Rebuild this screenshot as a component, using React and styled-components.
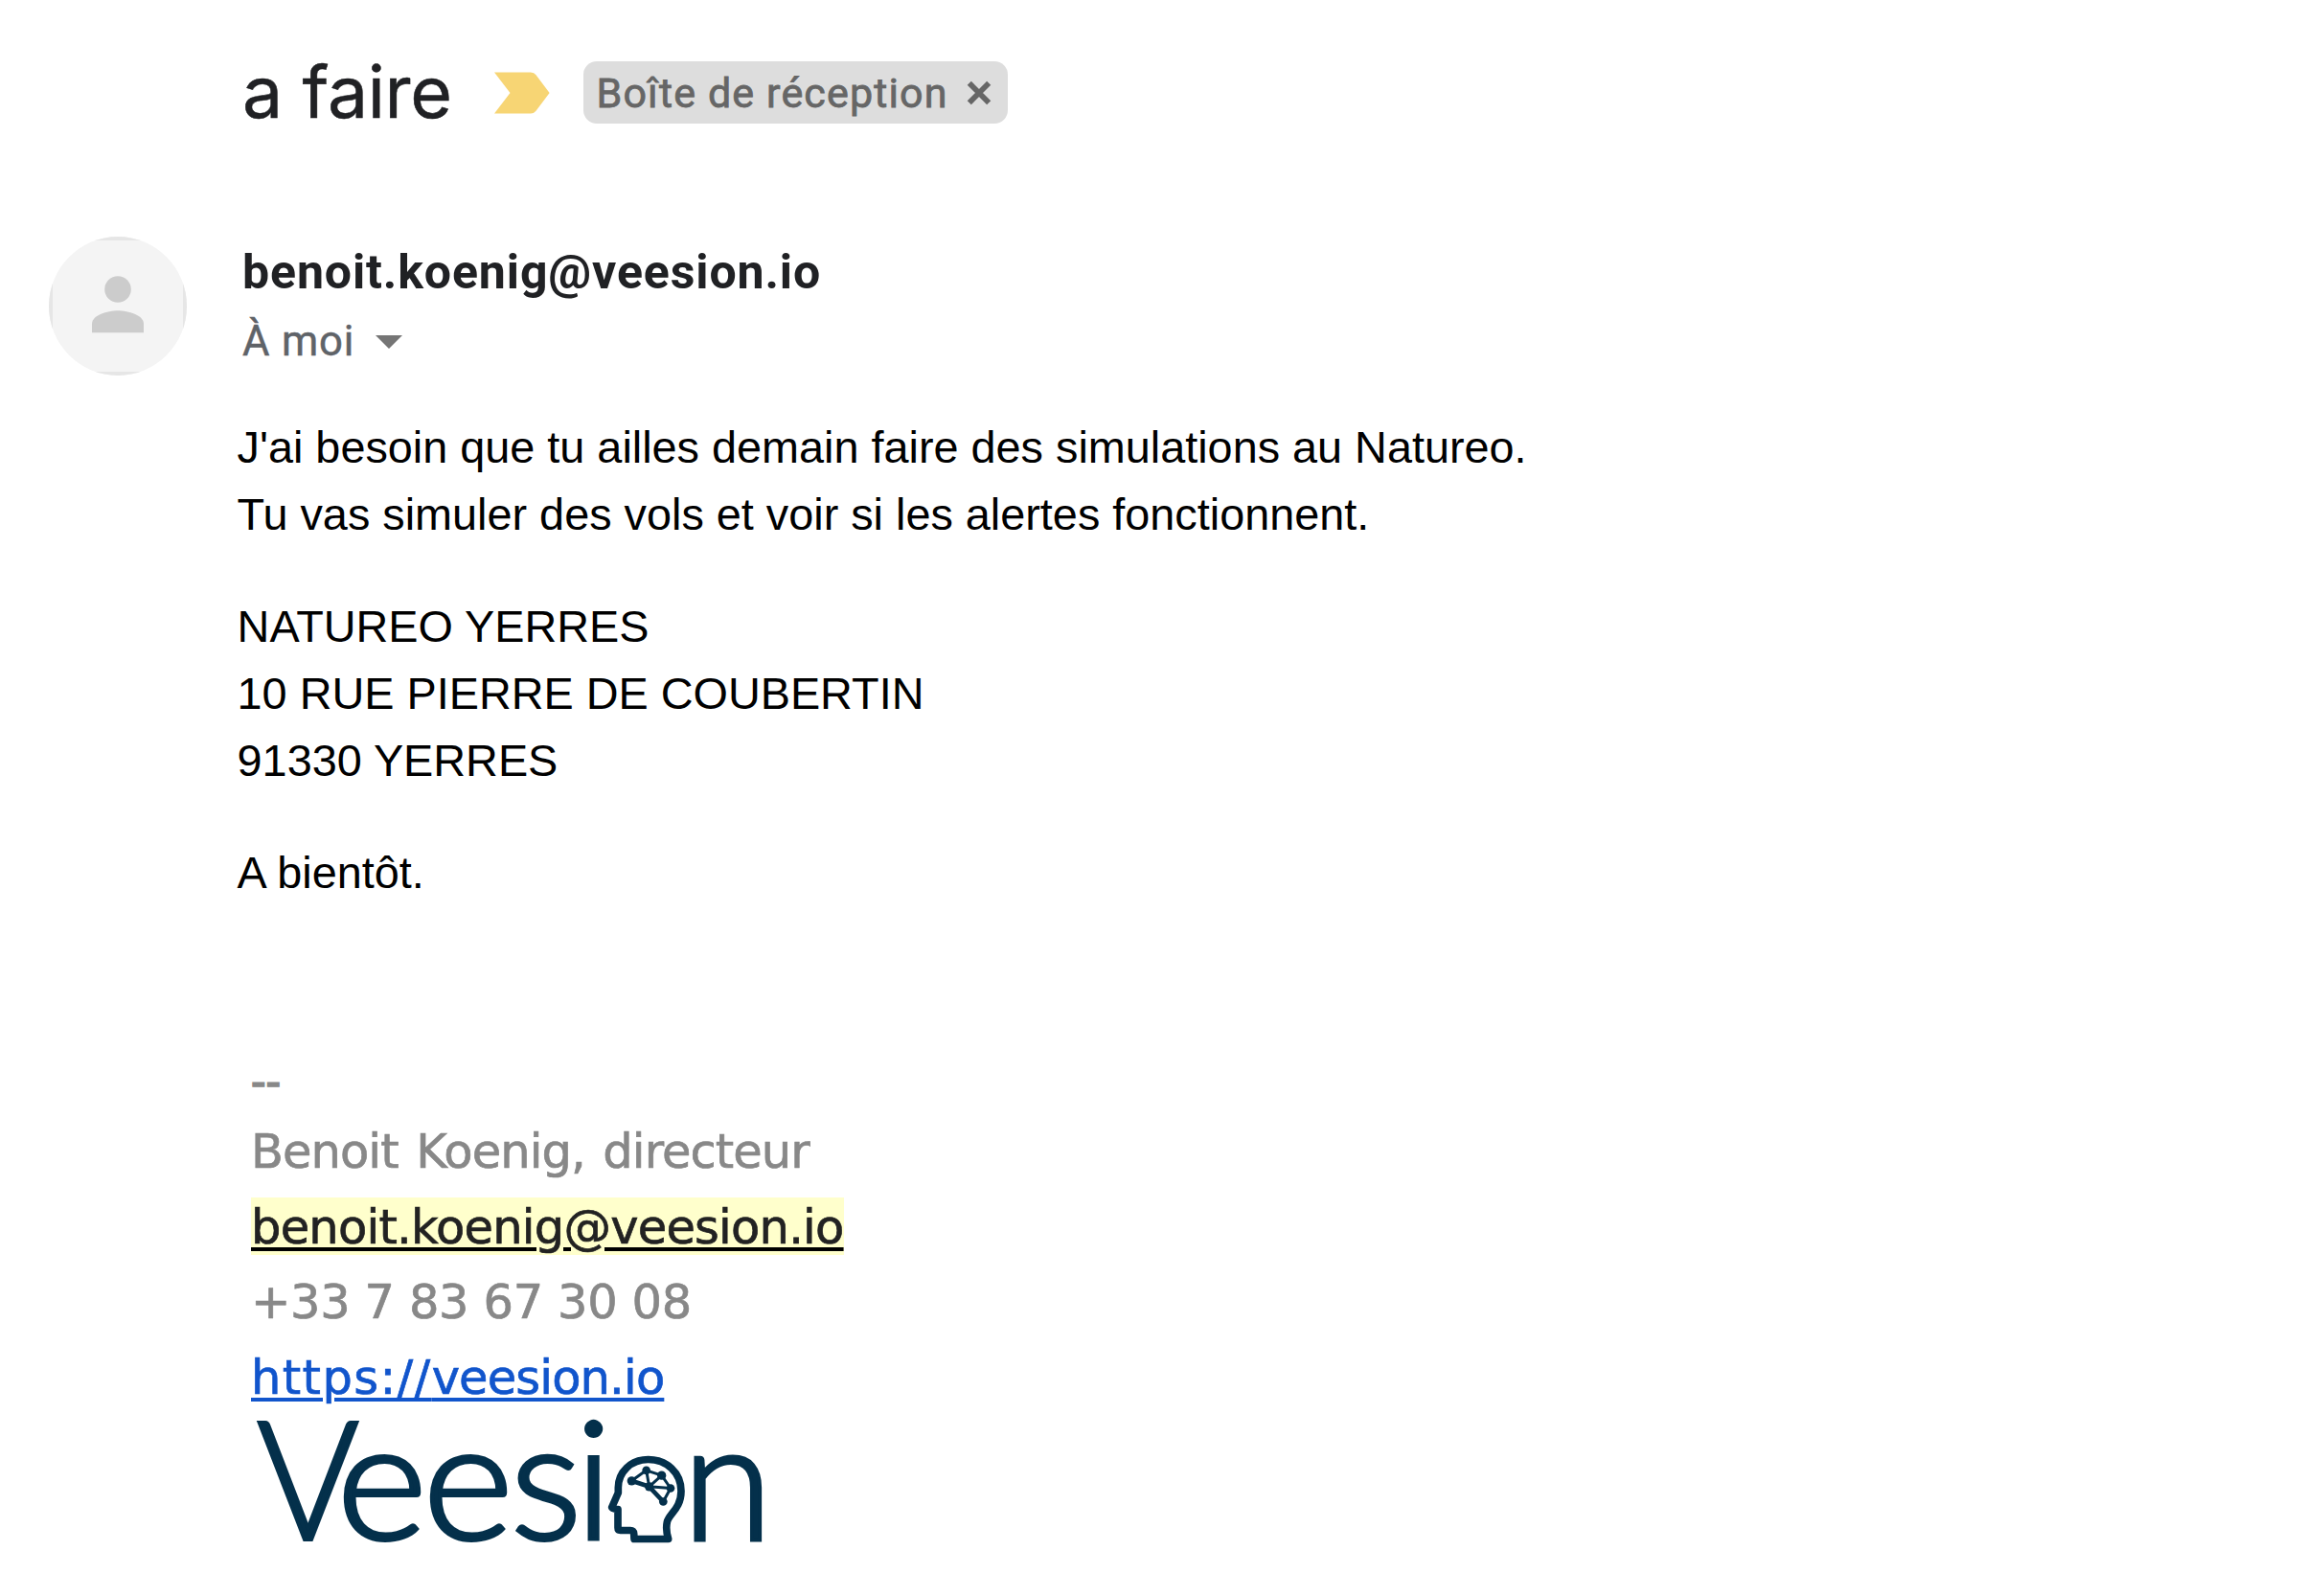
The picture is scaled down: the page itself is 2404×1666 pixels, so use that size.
import React from 'react';
import styled, { createGlobalStyle } from 'styled-components';

const GlobalStyle = createGlobalStyle`
  *, *::before, *::after { box-sizing: border-box; }
  body { margin: 0; background: #fff; }
`;

const Page = styled.main`
  display: flex;
  flex-direction: column;
  width: 2404px;
  height: 1666px;
  overflow: hidden;
  background: #fff;
  color: #000;
  white-space: nowrap;
`;

const SubjectBar = styled.header`
  display: flex;
  align-items: center;
  height: 65px;
  margin-top: 64px;
  padding-left: 253px;
`;

const Subject = styled.h1`
  width: 221px;
  margin: 0;
  padding-bottom: 2px;
  font: 400 75px/86px Inter, sans-serif;
  letter-spacing: -0.3px;
  color: #202124;
  -webkit-text-stroke: 0.5px #202124;
`;

const ImportanceMarker = styled.svg`
  display: block;
  width: 58px;
  height: 44px;
  margin: 0 35px 0 42px;
  fill: #f7d574;
`;

const LabelChip = styled.span`
  display: flex;
  align-items: center;
  justify-content: space-between;
  width: 443px;
  height: 65px;
  padding: 1px 17px 0 13.5px;
  border-radius: 14px;
  background: #ddd;
  color: #666;
  font: 400 43px/60px Roboto, sans-serif;
  letter-spacing: 1.15px;
  -webkit-text-stroke: 0.8px #666;
`;

const CloseIcon = styled.svg`
  display: block;
  width: 26px;
  height: 26px;
  stroke: #666;
  stroke-width: 5.8;
`;

const SenderBar = styled.section`
  display: flex;
  height: 145px;
  margin-top: 118px;
  padding-left: 51px;
`;

const Avatar = styled.div`
  width: 144px;
  height: 145px;
  border-radius: 50%;
  overflow: hidden;
`;

const AvatarFrame = styled.div`
  display: grid;
  place-items: center;
  width: 100%;
  height: 100%;
  padding-bottom: 4px;
  border: 4px solid #e6e6e6;
  background: #f4f4f4;
`;

const PersonIcon = styled.svg`
  display: block;
  width: 54px;
  height: 60px;
  fill: #ccc;
`;

const SenderInfo = styled.div`
  display: flex;
  flex-direction: column;
  padding: 7px 0 0 58px;
`;

const SenderName = styled.strong`
  font: 700 50px/60px Roboto, sans-serif;
  letter-spacing: 0.89px;
  color: #202124;
`;

const Recipient = styled.div`
  display: flex;
  align-items: center;
  gap: 22px;
  margin-top: 18px;
  font: 400 43.6px/50px Roboto, sans-serif;
  letter-spacing: 0.85px;
  color: #5f6368;
  -webkit-text-stroke: 0.5px #5f6368;
`;

const Caret = styled.span`
  border: 14px solid transparent;
  border-top-color: #757575;
  border-bottom: 0;
`;

const Body = styled.article`
  display: flex;
  flex-direction: column;
  gap: 46.3px;
  margin-top: 40.1px;
  padding-left: 247.6px;
  font: 400 46.8px/70.2px "Liberation Sans", Arial, sans-serif;
`;

const Paragraph = styled.p`
  margin: 0;
`;

const Signature = styled.footer`
  display: flex;
  flex-direction: column;
  align-items: flex-start;
  margin-top: 148px;
  padding-left: 262px;
  color: #888;
`;

const Separator = styled.div`
  font: 400 46.8px/70px "Liberation Sans", Arial, sans-serif;
  margin-bottom: -1px;
  -webkit-text-stroke: 1.6px #888;
`;

const SignatureLine = styled.div`
  font: 400 49.5px/78.6px "DejaVu Sans", Verdana, sans-serif;
  letter-spacing: ${({ $spacing }) => $spacing}px;
  word-spacing: ${({ $words = 0 }) => $words}px;
  -webkit-text-stroke: 0.7px currentColor;
`;

const Link = styled.a`
  color: #1155cc;
  text-decoration: underline;
  text-decoration-thickness: 4px;
  text-underline-offset: 3.5px;
`;

const MarkedLink = styled(Link)`
  padding-top: 2px;
  background: #ffffcc;
  color: #222;
  text-decoration-color: #000;
`;

const Scheme = styled.span`
  letter-spacing: 1.4px;
`;

const LogoImage = styled.svg`
  display: block;
  width: 544px;
  height: 144px;
  overflow: visible;
  fill: #04304b;
`;

const LogoLetter = styled.text`
  font: 300 172px Lato, sans-serif;
  stroke: #04304b;
  stroke-width: 4px;
`;

const LOGO_LETTERS = [
  { char: 'V', x: 268.5, stretch: 0.94 },
  { char: 'e', x: 351.6, stretch: 1.05 },
  { char: 'e', x: 441.6, stretch: 1.05 },
  { char: 's', x: 532.8, stretch: 1.02 },
  { char: 'i', x: 600.6, stretch: 1 },
  { char: 'n', x: 712.5, stretch: 0.99 },
];

const NODES = [
  [388, 229, 14],
  [434, 196, 13],
  [482, 212, 14],
  [443, 247, 14],
  [510, 252, 13],
  [487, 294, 13],
];

const EDGES = 'M388 229L434 196L482 212L510 252L487 294L443 247ZM434 196L443 247L482 212M443 247L510 252';

function Logo() {
  return (
    <LogoImage viewBox="262 1477 544 144" role="img" aria-label="Veesion">
      {LOGO_LETTERS.map(({ char, x, stretch }, i) => (
        <LogoLetter key={i} transform={`translate(${x} 1607) scale(${stretch} 1)`}>
          {char}
        </LogoLetter>
      ))}
      <g transform="translate(530 1469.5) scale(0.33333)" stroke="#04304b" strokeLinejoin="round" strokeLinecap="round">
        <path
          fill="none"
          strokeWidth="23"
          d="M396 411H503C497 392 496 372 499 358C504 333 543 316 543 261C543 203 497 162 440 162C385 162 346 202 346 250V266L326 312Q327 317 345 318V376Q345 384 353 384H384Q394 384 395 394Z"
        />
        <path fill="none" strokeWidth="9" d={EDGES} />
        <path fill="none" strokeWidth="14" d="M388 229L443 247L487 294" />
        {NODES.map(([cx, cy, r]) => (
          <circle key={cx} cx={cx} cy={cy} r={r} stroke="none" />
        ))}
      </g>
    </LogoImage>
  );
}

export default function App() {
  return (
    <Page>
      <GlobalStyle />
      <SubjectBar>
        <Subject>a faire</Subject>
        <ImportanceMarker viewBox="0 0 58 44">
          <path d="M0 0.5H38Q41.500 0.500 43.500 3.200L57.600 22L43.500 40.800Q41.500 43.500 38 43.500H0L16.500 22Z" />
        </ImportanceMarker>
        <LabelChip>
          Boîte de réception
          <CloseIcon viewBox="0 0 26 26">
            <path d="M2.800 2.800L23.200 23.200M23.200 2.800L2.800 23.200" />
          </CloseIcon>
        </LabelChip>
      </SubjectBar>

      <SenderBar>
        <Avatar>
          <AvatarFrame>
            <PersonIcon viewBox="0 0 54 60">
              <circle cx="27" cy="14" r="13.800" />
              <path d="M0 59.200V50C0 41 16 36.200 27 36.200S54 41 54 50V59.200Z" />
            </PersonIcon>
          </AvatarFrame>
        </Avatar>
        <SenderInfo>
          <SenderName>benoit.koenig@veesion.io</SenderName>
          <Recipient>
            À moi
            <Caret />
          </Recipient>
        </SenderInfo>
      </SenderBar>

      <Body>
        <Paragraph>
          J'ai besoin que tu ailles demain faire des simulations au Natureo.
          <br />
          Tu vas simuler des vols et voir si les alertes fonctionnent.
        </Paragraph>
        <Paragraph>
          NATUREO YERRES
          <br />
          10 RUE PIERRE DE COUBERTIN
          <br />
          91330 YERRES
        </Paragraph>
        <Paragraph>A bientôt.</Paragraph>
      </Body>

      <Signature>
        <Separator>--</Separator>
        <SignatureLine $spacing={-0.93} $words={3.8}>Benoit Koenig, directeur</SignatureLine>
        <SignatureLine $spacing={-0.78}>
          <MarkedLink>benoit.koenig@veesion.io</MarkedLink>
        </SignatureLine>
        <SignatureLine $spacing={-0.4}>+33 7 83 67 30 08</SignatureLine>
        <SignatureLine $spacing={-0.85}>
          <Link>
            <Scheme>https://</Scheme>
            veesion.io
          </Link>
        </SignatureLine>
        <Logo />
      </Signature>
    </Page>
  );
}
